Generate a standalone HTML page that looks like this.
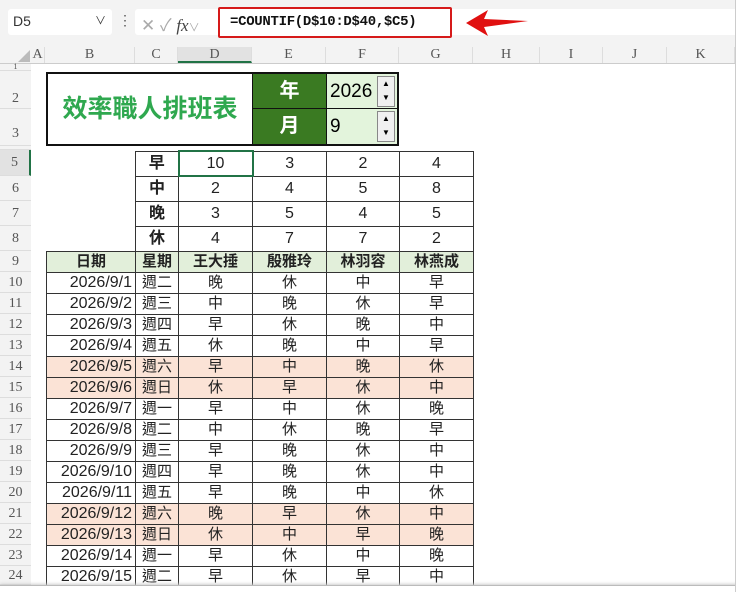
<!DOCTYPE html>
<html><head><meta charset="utf-8"><style>
*{margin:0;padding:0;box-sizing:border-box}
body{width:740px;height:592px;background:#fff;position:relative;overflow:hidden;font-family:"Liberation Sans","Noto Sans CJK TC",sans-serif}
.a{position:absolute}
.hdr{position:absolute;top:47px;height:16px;font-family:"Liberation Serif","Noto Serif CJK SC",serif;font-size:14px;color:#555;text-align:center;line-height:16px;border-right:1px solid #ddd}
.rh{position:absolute;left:0;width:31px;font-family:"Liberation Serif",serif;font-size:14px;color:#555;text-align:center;border-bottom:1px solid #ddd;background:#f3f3f3}
table{position:absolute;left:46px;top:150px;border-collapse:collapse;table-layout:fixed}
td{border:1px solid #333;text-align:center;font-size:15px;color:#222;padding:0;overflow:hidden;white-space:nowrap}
td.n{border:none}
td.d{text-align:right;padding-right:3px;font-size:16px}
tr.s td{height:25px;line-height:22px;font-size:16px}
tr.r td{height:21px;line-height:17px}
tr.g td{background:#e2efda;font-weight:bold}
tr.p td{background:#fbe3d6}
td.b{font-weight:bold}
</style></head><body>
<div class="a" style="left:0;top:0;width:740px;height:45px;background:#f3f3f3"></div>
<div class="a" style="left:8px;top:9px;width:104px;height:26px;background:#fff;border-radius:3px;font-size:14px;color:#333;padding:4px 5px">D5<span style="position:absolute;right:6px;top:3px;font-size:11px">&#8744;</span></div>
<div class="a" style="left:118px;top:12px;font-size:14px;color:#555">&#8942;</div>
<div class="a" style="left:135px;top:9px;width:85px;height:26px;background:#fff;border-radius:3px;color:#aaa;font-size:17px;padding:2px 6px">&#10005; &#10003; <i style="font-family:'Liberation Serif',serif;color:#444">fx</i><span style="font-size:11px">&#8744;</span></div>
<div class="a" style="left:218px;top:7px;width:234px;height:31px;border:2px solid #d61a1a;border-radius:2px;background:#fff;font-family:'Liberation Mono',monospace;font-size:14px;color:#111;padding:5px 0 0 10px;font-weight:bold;letter-spacing:-0.3px">=COUNTIF(D$10:D$40,$C5)</div>
<div class="a" style="left:452px;top:9px;width:288px;height:26px;background:#fff"></div>
<svg class="a" style="left:462px;top:8px" width="70" height="30"><path d="M4 15 L26 2 L22 11 L66 13 L22 19 L26 28 Z" fill="#e01010"/></svg>
<div class="a" style="left:0;top:45px;width:740px;height:19px;background:#f3f3f3;border-bottom:1px solid #ccc"></div>
<svg class="a" style="left:18px;top:50px" width="12" height="12"><path d="M12 0 L12 12 L0 12 Z" fill="#bbb"/></svg>
<div class="hdr" style="left:31px;width:14px">A</div>
<div class="hdr" style="left:45px;width:90px">B</div>
<div class="hdr" style="left:135px;width:43px">C</div>
<div class="hdr" style="left:178px;width:74px;background:#e2e2e2;border-bottom:2px solid #217346">D</div>
<div class="hdr" style="left:252px;width:74px">E</div>
<div class="hdr" style="left:326px;width:73px">F</div>
<div class="hdr" style="left:399px;width:74px">G</div>
<div class="hdr" style="left:473px;width:67px">H</div>
<div class="hdr" style="left:540px;width:63px">I</div>
<div class="hdr" style="left:603px;width:64px">J</div>
<div class="hdr" style="left:667px;width:68px">K</div>
<div class="a" style="left:0;top:64px;width:31px;height:521px;background:#f3f3f3;border-right:1px solid #ccc"></div>
<div class="rh" style="top:64px;height:7px;font-size:8px;line-height:6px">1</div>
<div class="rh" style="top:71px;height:38px;line-height:56px">2</div>
<div class="rh" style="top:109px;height:37px;line-height:50px">3</div>
<div class="rh" style="top:146px;height:4px"></div>
<div class="rh" style="top:150px;height:26px;line-height:26px;background:#e2e2e2;border-right:2px solid #217346">5</div>
<div class="rh" style="top:176px;height:25px;line-height:25px">6</div>
<div class="rh" style="top:201px;height:25px;line-height:25px">7</div>
<div class="rh" style="top:226px;height:25px;line-height:25px">8</div>
<div class="rh" style="top:251px;height:21px;line-height:21px">9</div>
<div class="rh" style="top:272px;height:21px;line-height:21px">10</div>
<div class="rh" style="top:293px;height:21px;line-height:21px">11</div>
<div class="rh" style="top:314px;height:21px;line-height:21px">12</div>
<div class="rh" style="top:335px;height:21px;line-height:21px">13</div>
<div class="rh" style="top:356px;height:21px;line-height:21px">14</div>
<div class="rh" style="top:377px;height:21px;line-height:21px">15</div>
<div class="rh" style="top:398px;height:21px;line-height:21px">16</div>
<div class="rh" style="top:419px;height:21px;line-height:21px">17</div>
<div class="rh" style="top:440px;height:21px;line-height:21px">18</div>
<div class="rh" style="top:461px;height:21px;line-height:21px">19</div>
<div class="rh" style="top:482px;height:21px;line-height:21px">20</div>
<div class="rh" style="top:503px;height:21px;line-height:21px">21</div>
<div class="rh" style="top:524px;height:21px;line-height:21px">22</div>
<div class="rh" style="top:545px;height:21px;line-height:21px">23</div>
<div class="rh" style="top:566px;height:19px;line-height:19px">24</div>
<div class="a" style="left:46px;top:72px;width:353px;height:74px;border:2px solid #111"></div>
<div class="a" style="left:48px;top:74px;width:204px;height:70px;color:#2fa84f;font-size:25px;line-height:70px;text-align:center;font-weight:bold">效率職人排班表</div>
<div class="a" style="left:252px;top:74px;width:74px;height:35px;background:#3a7a22;border-left:1px solid #111;border-bottom:1px solid #111;color:#fff;font-size:20px;font-weight:bold;text-align:center;line-height:35px">年</div>
<div class="a" style="left:252px;top:109px;width:74px;height:35px;background:#3a7a22;border-left:1px solid #111;color:#fff;font-size:20px;font-weight:bold;text-align:center;line-height:35px">月</div>
<div class="a" style="left:326px;top:74px;width:71px;height:35px;background:#e3f4dc;border-left:1px solid #111;border-bottom:1px solid #111;font-size:19px;line-height:35px;padding-left:3px">2026</div>
<div class="a" style="left:326px;top:109px;width:71px;height:35px;background:#e3f4dc;border-left:1px solid #111;font-size:19px;line-height:35px;padding-left:3px">9</div>
<div class="a" style="left:377px;top:76px;width:18px;height:31px;background:#f0f0f0;border:1px solid #888;font-size:8px;text-align:center;line-height:14px">▲<br>▼</div>
<div class="a" style="left:377px;top:111px;width:18px;height:31px;background:#f0f0f0;border:1px solid #888;font-size:8px;text-align:center;line-height:14px">▲<br>▼</div>
<table>
<colgroup><col style="width:89px"><col style="width:43px"><col style="width:74px"><col style="width:74px"><col style="width:73px"><col style="width:74px"></colgroup>
<tr class="s"><td class="n"></td><td class="b">早</td><td style="border:2px solid #217346">10</td><td>3</td><td>2</td><td>4</td></tr>
<tr class="s"><td class="n"></td><td class="b">中</td><td>2</td><td>4</td><td>5</td><td>8</td></tr>
<tr class="s"><td class="n"></td><td class="b">晚</td><td>3</td><td>5</td><td>4</td><td>5</td></tr>
<tr class="s"><td class="n"></td><td class="b">休</td><td>4</td><td>7</td><td>7</td><td>2</td></tr>
<tr class="r g"><td>日期</td><td>星期</td><td>王大捶</td><td>殷雅玲</td><td>林羽容</td><td>林燕成</td></tr>
<tr class="r"><td class="d">2026/9/1</td><td>週二</td><td>晚</td><td>休</td><td>中</td><td>早</td></tr>
<tr class="r"><td class="d">2026/9/2</td><td>週三</td><td>中</td><td>晚</td><td>休</td><td>早</td></tr>
<tr class="r"><td class="d">2026/9/3</td><td>週四</td><td>早</td><td>休</td><td>晚</td><td>中</td></tr>
<tr class="r"><td class="d">2026/9/4</td><td>週五</td><td>休</td><td>晚</td><td>中</td><td>早</td></tr>
<tr class="r p"><td class="d">2026/9/5</td><td>週六</td><td>早</td><td>中</td><td>晚</td><td>休</td></tr>
<tr class="r p"><td class="d">2026/9/6</td><td>週日</td><td>休</td><td>早</td><td>休</td><td>中</td></tr>
<tr class="r"><td class="d">2026/9/7</td><td>週一</td><td>早</td><td>中</td><td>休</td><td>晚</td></tr>
<tr class="r"><td class="d">2026/9/8</td><td>週二</td><td>中</td><td>休</td><td>晚</td><td>早</td></tr>
<tr class="r"><td class="d">2026/9/9</td><td>週三</td><td>早</td><td>晚</td><td>休</td><td>中</td></tr>
<tr class="r"><td class="d">2026/9/10</td><td>週四</td><td>早</td><td>晚</td><td>休</td><td>中</td></tr>
<tr class="r"><td class="d">2026/9/11</td><td>週五</td><td>早</td><td>晚</td><td>中</td><td>休</td></tr>
<tr class="r p"><td class="d">2026/9/12</td><td>週六</td><td>晚</td><td>早</td><td>休</td><td>中</td></tr>
<tr class="r p"><td class="d">2026/9/13</td><td>週日</td><td>休</td><td>中</td><td>早</td><td>晚</td></tr>
<tr class="r"><td class="d">2026/9/14</td><td>週一</td><td>早</td><td>休</td><td>中</td><td>晚</td></tr>
<tr class="r"><td class="d">2026/9/15</td><td>週二</td><td>早</td><td>休</td><td>早</td><td>中</td></tr>
</table>
<div class="a" style="left:0;top:585px;width:740px;height:7px;background:#fff;border-top:1px solid #bbb;box-shadow:0 -1px 3px #ccc"></div>
<div class="a" style="left:735px;top:0;width:5px;height:592px;background:#fff;border-left:1px solid #ccc"></div>
</body></html>
